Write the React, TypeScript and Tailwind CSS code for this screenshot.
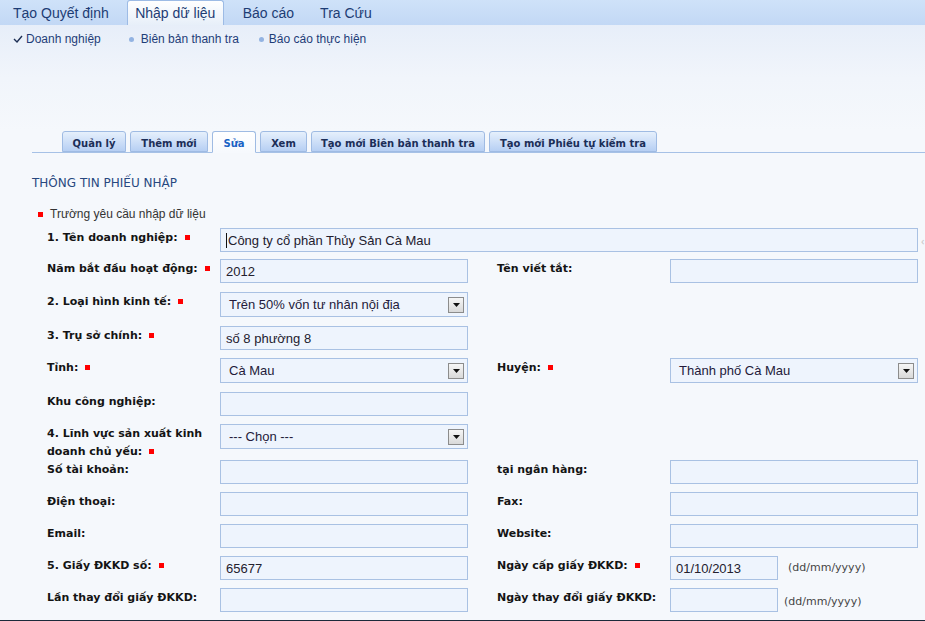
import React from "react";

const arial = "font-['Liberation_Sans',Arial,sans-serif]";
const tahoma = "font-['DejaVu_Sans',Verdana,sans-serif]";

function Req() {
  return <span className="inline-block w-[5px] h-[5px] bg-[#ff0000] ml-[7px] align-middle relative -top-[1px]" />;
}

function Label({ children, req }: { children: React.ReactNode; req?: boolean }) {
  return (
    <div className={`w-[173px] shrink-0 pt-[1px] font-bold text-[11px] leading-[18px] text-[#141414] ${tahoma}`}>
      {children}
      {req && <Req />}
    </div>
  );
}

function Input({ value, w = "w-[248px]", caret }: { value?: string; w?: string; caret?: boolean }) {
  return (
    <div className={`${w} shrink-0 h-[24px] border border-[#a9c1e3] bg-[#eef4fd] flex items-center pl-[5px] pt-px text-[13px] text-[#23202e] ${arial}`}>
      {caret && <span className="w-px h-[15px] bg-[#111] mr-px" />}
      {value}
    </div>
  );
}

function Select({ value, w = "w-[248px]" }: { value: string; w?: string }) {
  return (
    <div className={`${w} shrink-0 h-[25px] border border-[#a9c1e3] bg-[#eef4fd] flex items-center pl-[8px] pr-[3px] text-[13px] text-[#241a3a] ${arial}`}>
      <span className="flex-1">{value}</span>
      <span className="w-[16px] h-[16px] border border-[#8c8c8c] bg-gradient-to-b from-[#f6f6f6] to-[#d9d9d9] flex items-center justify-center">
        <svg width="7" height="4" viewBox="0 0 7 4">
          <path d="M0 0h7L3.5 4z" fill="#111" />
        </svg>
      </span>
    </div>
  );
}

function DateField({ value, offset = "ml-[10px]" }: { value?: string; offset?: string }) {
  return (
    <div className="flex items-center">
      <Input value={value} w="w-[108px]" />
      <span className={`${offset} text-[11px] text-[#454545] ${tahoma}`}>(dd/mm/yyyy)</span>
    </div>
  );
}

function Row({ h, children }: { h: string; children: React.ReactNode }) {
  return <div className={`flex items-start pl-[47px] ${h}`}>{children}</div>;
}

function Gap() {
  return <div className="w-[29px] shrink-0" />;
}

const tabs = [
  { t: "Quản lý", w: "w-[64px]" },
  { t: "Thêm mới", w: "w-[78px]" },
  { t: "Sửa", w: "w-[44px]", active: true },
  { t: "Xem", w: "w-[47px]" },
  { t: "Tạo mới Biên bản thanh tra", w: "w-[174px]" },
  { t: "Tạo mới Phiếu tự kiểm tra", w: "w-[168px]" },
];

export default function App() {
  return (
    <div className="w-[925px] h-[621px] overflow-hidden flex flex-col bg-[#f5f8fc]">
      {/* top nav */}
      <div className={`h-[25px] shrink-0 bg-gradient-to-b from-[#cfe2f9] to-[#c2d8f5] flex items-stretch text-[14px] text-[#1d3c74] ${arial}`}>
        <div className="pl-[13px] pr-[18px] pt-px flex items-center">Tạo Quyết định</div>
        <div className="w-[97px] rounded-t-[3px] border border-b-0 border-[#9dbbe5] bg-gradient-to-b from-[#ffffff] to-[#e7eff9] flex items-center justify-center pt-px">
          Nhập dữ liệu
        </div>
        <div className="pl-[19px] pr-[26px] pt-px flex items-center">Báo cáo</div>
        <div className="pt-px flex items-center">Tra Cứu</div>
      </div>

      {/* sub nav */}
      <div className="h-[106px] shrink-0 bg-gradient-to-b from-[#e7eef9] via-[#f1f5fb] to-[#f5f8fc]">
        <div className={`flex items-center pt-[7px] h-[21px] text-[12px] text-[#1f3d78] ${arial}`}>
          <div className="flex items-center pl-[13px]">
            <svg width="10" height="8" viewBox="0 0 10 8" className="mr-[3px]">
              <path d="M1 4l3 3 5-6" stroke="#1d2f55" strokeWidth="1.4" fill="none" />
            </svg>
            Doanh nghiệp
          </div>
          <div className="flex items-center ml-[28px]">
            <span className="w-[5px] h-[5px] rounded-full bg-[#93b3e2] mr-[7px]" />
            Biên bản thanh tra
          </div>
          <div className="flex items-center ml-[20px]">
            <span className="w-[5px] h-[5px] rounded-full bg-[#93b3e2] mr-[5px]" />
            Báo cáo thực hiện
          </div>
        </div>
      </div>

      {/* tab strip */}
      <div className="ml-[32px] h-[22px] shrink-0 border-b border-[#a6c1e6] flex items-end pl-[30px] gap-[4px]">
        {tabs.map((tab) => (
          <div
            key={tab.t}
            className={`${tab.w} rounded-t-[3px] border border-[#9fbbe3] flex items-center justify-center pt-[3px] font-bold text-[10px] ${tahoma} ${
              tab.active
                ? "h-[22px] bg-gradient-to-b from-[#ffffff] to-[#f6f9fd] border-b-[#f6f9fd] text-[#1862c4] relative top-px"
                : "h-[21px] bg-gradient-to-b from-[#e6f0fc] to-[#b6cff3] text-[#1b2e58]"
            }`}
          >
            {tab.t}
          </div>
        ))}
      </div>

      <div className={`mt-[23px] ml-[32px] h-[14px] leading-[14px] text-[12px] text-[#28487f] ${tahoma}`}>THÔNG TIN PHIẾU NHẬP</div>

      <div className={`mt-[17px] ml-[38px] h-[14px] flex items-center text-[12px] text-[#333] ${arial}`}>
        <span className="w-[5px] h-[5px] bg-[#ff0000] mr-[7px]" />
        Trường yêu cầu nhập dữ liệu
      </div>

      <div className="mt-[7px] flex flex-col">
        <Row h="h-[31px]">
          <Label req>1. Tên doanh nghiệp:</Label>
          <Input value="Công ty cổ phần Thủy Sản Cà Mau" w="w-[698px]" caret />
          <span className="ml-[3px] mt-[5px] text-[11px] text-[#c8c8c8]">‹</span>
        </Row>
        <Row h="h-[33px]">
          <Label req>Năm bắt đầu hoạt động:</Label>
          <Input value="2012" />
          <Gap />
          <Label>Tên viết tắt:</Label>
          <Input />
        </Row>
        <Row h="h-[34px]">
          <Label req>2. Loại hình kinh tế:</Label>
          <Select value="Trên 50% vốn tư nhân nội địa" />
        </Row>
        <Row h="h-[32px]">
          <Label req>3. Trụ sở chính:</Label>
          <Input value="số 8 phường 8" />
        </Row>
        <Row h="h-[34px]">
          <Label req>Tỉnh:</Label>
          <Select value="Cà Mau" />
          <Gap />
          <Label req>Huyện:</Label>
          <Select value="Thành phố Cà Mau" />
        </Row>
        <Row h="h-[32px]">
          <Label>Khu công nghiệp:</Label>
          <Input />
        </Row>
        <Row h="h-[36px]">
          <Label req>
            4. Lĩnh vực sản xuất kinh
            <br />
            doanh chủ yếu:
          </Label>
          <Select value="--- Chọn ---" />
        </Row>
        <Row h="h-[32px]">
          <Label>Số tài khoản:</Label>
          <Input />
          <Gap />
          <Label>tại ngân hàng:</Label>
          <Input />
        </Row>
        <Row h="h-[32px]">
          <Label>Điện thoại:</Label>
          <Input />
          <Gap />
          <Label>Fax:</Label>
          <Input />
        </Row>
        <Row h="h-[32px]">
          <Label>Email:</Label>
          <Input />
          <Gap />
          <Label>Website:</Label>
          <Input />
        </Row>
        <Row h="h-[32px]">
          <Label req>5. Giấy ĐKKD số:</Label>
          <Input value="65677" />
          <Gap />
          <Label req>Ngày cấp giấy ĐKKD:</Label>
          <DateField value="01/10/2013" />
        </Row>
        <Row h="h-[32px]">
          <Label>Lần thay đổi giấy ĐKKD:</Label>
          <Input />
          <Gap />
          <Label>Ngày thay đổi giấy ĐKKD:</Label>
          <DateField offset="ml-[6px] mt-[4px]" />
        </Row>
      </div>

      <div className="flex-1" />
      <div className="h-px shrink-0 bg-[#1c2a3a]" />
    </div>
  );
}
